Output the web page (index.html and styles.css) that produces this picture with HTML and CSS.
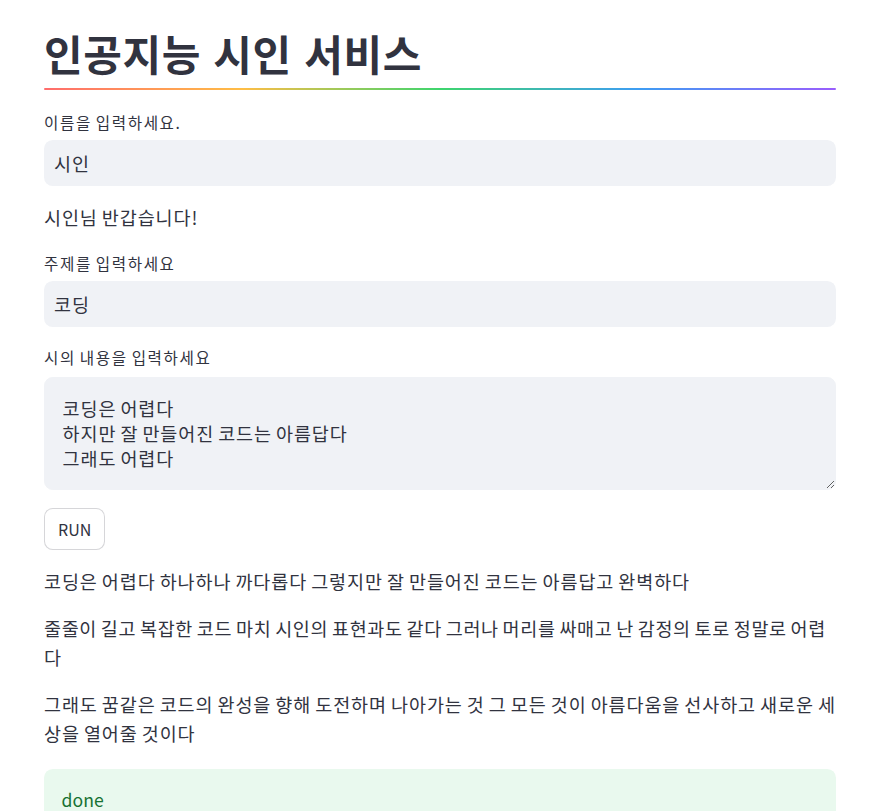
FILE: index.html
```html
<!DOCTYPE html>
<html lang="ko">
<head>
<meta charset="utf-8">
<title>인공지능 시인 서비스</title>
<link rel="stylesheet" href="styles.css">
</head>
<body>
<main class="page">
  <h1 class="title">인공지능 시인 서비스</h1>
  <div class="rainbow"></div>

  <label class="label label-1">이름을 입력하세요.</label>
  <div class="input">시인</div>

  <p class="text greet">시인님 반갑습니다!</p>

  <label class="label label-2">주제를 입력하세요</label>
  <div class="input">코딩</div>

  <label class="label label-3">시의 내용을 입력하세요</label>
  <textarea class="area" readonly>코딩은 어렵다
하지만 잘 만들어진 코드는 아름답다
그래도 어렵다</textarea>

  <button class="btn">RUN</button>

  <p class="text poem p1">코딩은 어렵다 하나하나 까다롭다 그렇지만 잘 만들어진 코드는 아름답고 완벽하다</p>
  <p class="text poem p2">줄줄이 길고 복잡한 코드 마치 시인의 표현과도 같다 그러나 머리를 싸매고 난 감정의 토로 정말로 어렵다</p>
  <p class="text poem p3">그래도 꿈같은 코드의 완성을 향해 도전하며 나아가는 것 그 모든 것이 아름다움을 선사하고 새로운 세상을 열어줄 것이다</p>

  <div class="success">done</div>
</main>
</body>
</html>
```
FILE: styles.css
```css
* { box-sizing: border-box; }
html, body { margin: 0; padding: 0; background: #fff; }
body {
  font-family: "Noto Sans CJK KR", "Noto Sans", sans-serif;
  color: rgb(49, 51, 63);
  font-size: 18.5px;
  letter-spacing: 0.9px;
  word-spacing: -2px;
  overflow: hidden;
}
.page {
  width: 792px;
  margin-left: 44px;
  padding-top: 28px;
  display: flex;
  flex-direction: column;
  align-items: flex-start;
}
.title {
  margin: 0;
  font-size: 42px;
  font-weight: 700;
  letter-spacing: 0.6px;
  word-spacing: 0;
  line-height: 50px;
  padding-bottom: 10px;
}
.rainbow {
  width: 100%;
  height: 2px;
  border-radius: 2px;
  background: linear-gradient(to right, #ff6c6c, #ffbd45, #3dd56d, #3d9df3, #9a5dfd);
}
.label {
  display: block;
  font-size: 15.6px;
  letter-spacing: 1.6px;
  word-spacing: -2px;
  line-height: 24px;
  margin-bottom: 6px;
}
.label-1 { margin-top: 20px; }
.label-2 { margin-top: 20px; }
.label-3 { margin-top: 18px; margin-bottom: 8px; }
.input {
  width: 100%;
  height: 46px;
  background: rgb(240, 242, 246);
  border-radius: 8.8px;
  padding: 0 10px;
  display: flex;
  align-items: center;
}
.text { margin: 0; }
.greet { margin-top: 17px; line-height: 28px; }
.area {
  display: block;
  width: 100%;
  height: 113px;
  margin: 0;
  border: 1px solid rgb(240, 242, 246);
  border-radius: 8.8px;
  background: rgb(240, 242, 246);
  color: rgb(49, 51, 63);
  font-family: "Noto Sans CJK KR", "Noto Sans", sans-serif;
  font-size: 18.5px;
  letter-spacing: 0.9px;
  word-spacing: -2px;
  line-height: 25px;
  padding: 18px 17.6px;
  resize: vertical;
  outline: none;
}
.btn {
  margin-top: 18px;
  height: 42px;
  padding: 0 13px;
  border: 1px solid rgba(49, 51, 63, 0.2);
  border-radius: 8.8px;
  background: #fff;
  color: rgb(49, 51, 63);
  font-family: "Noto Sans CJK KR", "Noto Sans", sans-serif;
  font-size: 16px;
  letter-spacing: 0;
}
.poem { line-height: 29.5px; }
.p1 { margin-top: 17px; }
.p2 { margin-top: 17px; letter-spacing: 0.65px; }
.p3 { margin-top: 17px; }
.success {
  margin-top: 20px;
  width: 100%;
  height: 80px;
  border-radius: 8.8px;
  background: rgb(233, 249, 238);
  color: rgb(23, 114, 51);
  padding: 17px 17.6px;
  line-height: 28px;
  font-size: 17.6px;
  letter-spacing: 0;
  word-spacing: 0;
}
```
